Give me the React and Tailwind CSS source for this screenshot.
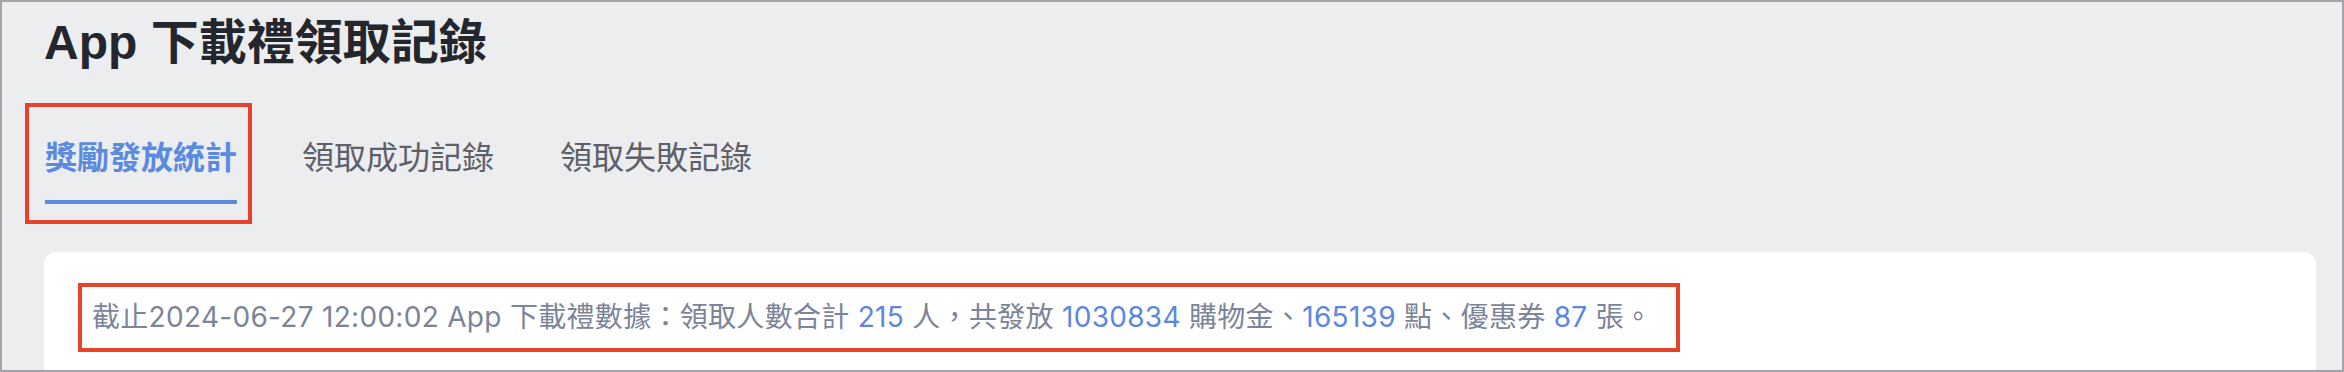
export default function App() {
  const font = { fontFamily: '"Liberation Sans", "Noto Sans CJK TC", sans-serif' };
  const infoFont = { fontFamily: 'Inter, "Noto Sans CJK TC", sans-serif' };

  return (
    <div
      className="h-[372px] w-full overflow-hidden border-2 border-[#a3a4a8] bg-[#ecedef]"
      style={font}
    >
      <h1 className="pl-[42px] pt-[12px] text-[48px] font-bold leading-[1.2] text-[#24262e]">
        App 下載禮領取記錄
      </h1>

      <div className="mt-[31px] flex items-start pl-[23px]">
        <div className="border-4 border-[#e8432a] pb-[16px] pl-[16px] pr-[11px] pt-[27px]">
          <div className="text-[32px] font-bold leading-[48px] text-[#5b8be0]">獎勵發放統計</div>
          <div className="mt-[18px] h-[4px] bg-[#5b8be0]" />
        </div>
        <div className="ml-[50px] pt-[31px] text-[32px] leading-[48px] text-[#5d6069]">領取成功記錄</div>
        <div className="ml-[66px] pt-[31px] text-[32px] leading-[48px] text-[#5d6069]">領取失敗記錄</div>
      </div>

      <div className="ml-[42px] mr-[26px] mt-[28px] h-[200px] rounded-t-[12px] bg-white pl-[34px] pt-[31px]">
        <div
          className="inline-flex border-4 border-[#e8432a] py-[9px] pl-[10px] pr-[24px] text-[28px] leading-[43px] tracking-[0.3px] text-[#7b8498]"
          style={infoFont}
        >
          <span>
            截止2024-06-27 12:00:02 App 下載禮數據：領取人數合計{' '}
            <span className="text-[#5b87de]">215</span> 人，共發放{' '}
            <span className="text-[#5b87de]">1030834</span> 購物金、
            <span className="text-[#5b87de]">165139</span> 點、優惠券{' '}
            <span className="text-[#5b87de]">87</span> 張。
          </span>
        </div>
      </div>
    </div>
  );
}
